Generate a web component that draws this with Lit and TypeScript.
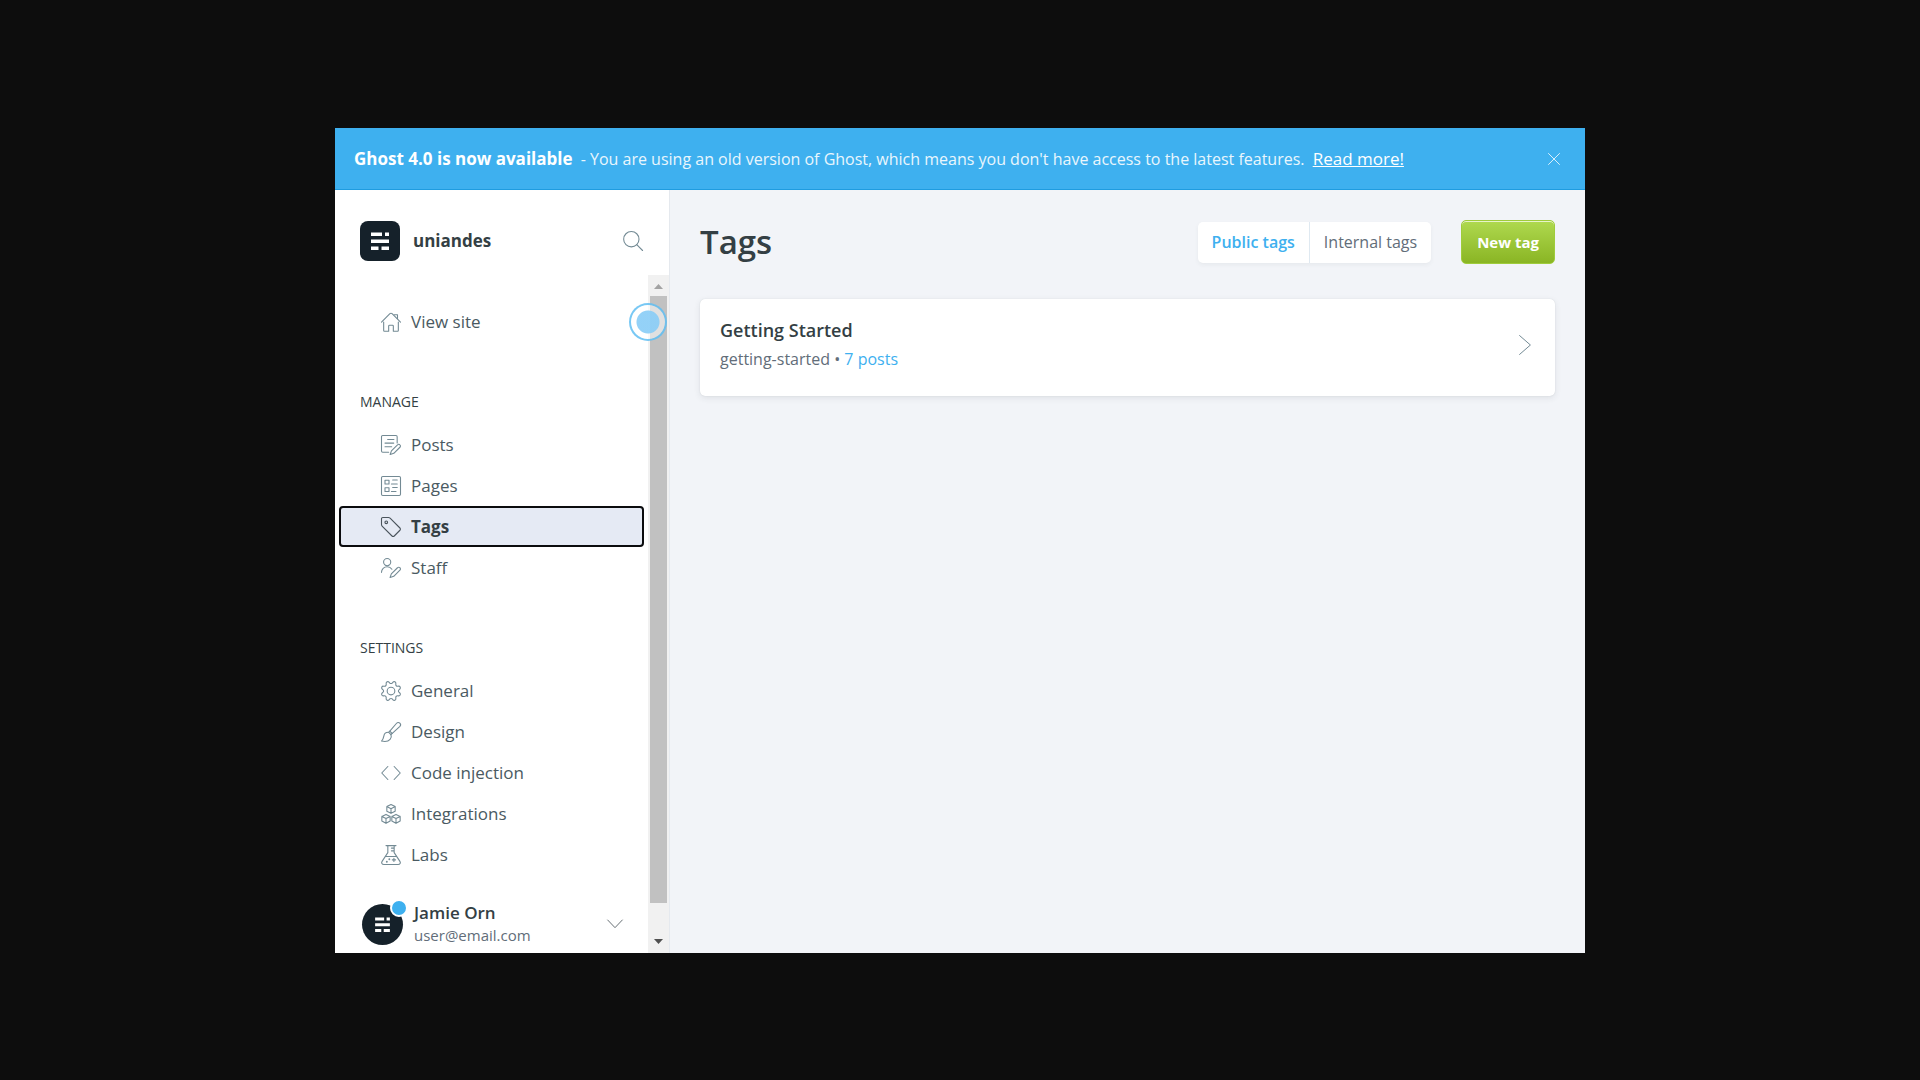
import { LitElement, html, css, svg, nothing } from "lit";
import type { SVGTemplateResult } from "lit";
import { customElement, property, state } from "lit/decorators.js";
import { classMap } from "lit/directives/class-map.js";

const ICONS: Record<string, SVGTemplateResult> = {
  house: svg`<path d="M.6 12.200 10.700 2a1.800 1.800 0 0 1 2.600 0l10.100 10.200"/><path d="M3.200 12v10.300c0 .5.3.8.8.8h5.200v-6.200c0-.6.5-1.100 1.100-1.100h3.400c.6 0 1.100.5 1.100 1.100v6.200H20c.5 0 .8-.3.8-.8V12"/><path d="M15.800 3.300h4v4.600"/>`,
  posts: svg`<path d="M9.200 20.600H2A1.400 1.400 0 0 1 .6 19.200V2A1.400 1.400 0 0 1 2 .6h16A1.400 1.400 0 0 1 19.400 2v7.500"/><path d="M8 5.300h7.500M4.800 9.700h10.500M4.800 14h8"/><path d="M22.700 11.800a2 2 0 0 1 0 2.900l-7.300 7.300-4.400 1.400 1.500-4.300 7.300-7.300a2 2 0 0 1 2.900 0z"/>`,
  pages: svg`<rect x=".6" y=".6" width="22.8" height="22.8" rx="1.5"/><rect x="4.800" y="5" width="4.800" height="4.600"/><rect x="4.800" y="14" width="4.800" height="4.600"/><path d="M14 4.800h5.500M12.500 9.600h7M14 13.800h5.500M12.500 18.600h5.500"/>`,
  tag: svg`<path d="M.6 2.200A1.600 1.600 0 0 1 2.200.6h6.900c.7 0 1.300.3 1.800.7l11.800 11.900a1.900 1.900 0 0 1 0 2.700l-6.800 6.900a1.900 1.900 0 0 1-2.700 0L1.300 10.900A2.500 2.500 0 0 1 .6 9.100z"/><circle cx="6.300" cy="6.300" r="1.600"/>`,
  staff: svg`<circle cx="7.400" cy="4.900" r="4.300"/><path d="M.6 17.200c0-3.800 3-6.800 6.800-6.800 2.400 0 4.500 1.200 5.700 3.100"/><path d="M22.700 11.700a2 2 0 0 1 0 2.900l-7.400 7.400-4.400 1.400 1.500-4.300 7.400-7.400a2 2 0 0 1 2.900 0z"/>`,
  cog: svg`<path d="M10.546 2.438a1.957 1.957 0 0 0 2.908 0L14.400 1.400a1.959 1.959 0 0 1 3.410 1.413l-.071 1.400a1.958 1.958 0 0 0 2.051 2.053l1.400-.071A1.959 1.959 0 0 1 22.600 9.600l-1.038.946a1.958 1.958 0 0 0 0 2.908l1.040.943a1.959 1.959 0 0 1-1.413 3.410l-1.400-.071a1.958 1.958 0 0 0-2.056 2.056l.071 1.400A1.959 1.959 0 0 1 14.400 22.600l-.941-1.041a1.959 1.959 0 0 0-2.908 0L9.600 22.600A1.959 1.959 0 0 1 6.192 21.200l.072-1.400a1.958 1.958 0 0 0-2.056-2.056l-1.400.071A1.958 1.958 0 0 1 1.400 14.400l1.041-.943a1.957 1.957 0 0 0 0-2.908L1.400 9.600A1.958 1.958 0 0 1 2.809 6.200l1.400.071A1.958 1.958 0 0 0 6.264 4.211L6.192 2.810A1.959 1.959 0 0 1 9.600 1.400z"/><circle cx="12" cy="12" r="4.600"/>`,
  brush: svg`<path d="M22.600 1.400a2.700 2.700 0 0 0-3.900.1L9.300 12.400l2.600 2.700L22.700 5.200a2.700 2.700 0 0 0-.1-3.800z"/><path d="m10.600 11 2.700 2.800M9.300 12.400c-3.100-.2-5.400 1.700-5.900 4.500-.4 2.200-1 4.300-2.800 6 4.200.9 8.300.3 10.300-2 1.500-1.700 1.900-3.800 1-5.800"/>`,
  code: svg`<path d="M8.200 4.200.9 12l7.300 7.800M15.800 4.200l7.300 7.800-7.300 7.800"/>`,
  blocks: svg`<path d="m12 .7 5 2.400v5.600l-5 2.500-5-2.500V3.100zM7 3.100l5 2.500 5-2.500M12 5.600v5.600"/><path d="m6 12.500 5 2.400v5.600L6 23.200l-5-2.700v-5.600zM1 14.900l5 2.500 5-2.500M6 17.400v5.800"/><path d="m18 12.500 5 2.400v5.600l-5 2.700-5-2.700v-5.600zM13 14.900l5 2.500 5-2.500M18 17.400v5.800"/>`,
  flask: svg`<path d="M6 .7h12M8.200.7v8.500L1.300 19.600c-1.300 2-.1 3.800 2.200 3.800h17c2.300 0 3.500-1.800 2.200-3.800L15.800 9.200V.7M5.200 13.700h13.600M12.500 3.700h3.300M12.500 7h3.300M15.500 15.800v4M13.500 17.800h4"/><circle cx="10" cy="17" r=".5"/><circle cx="7" cy="20" r=".5"/>`,
  search: svg`<circle cx="10" cy="9.800" r="9.200"/><path d="m16.500 16.400 7 7"/>`,
  close: svg`<path d="m1 1 22 22M23 1 1 23"/>`,
  right: svg`<path d="m5.500.7 13 11.300-13 11.300"/>`,
  down: svg`<path d="m1 6 11 11.500L23 6"/>`,
};

const icon = (name: string) =>
  html`<svg class="icon ${name}" viewBox="0 0 24 24" aria-hidden="true">${ICONS[name]}</svg>`;

const iconStyles = css`
  * {
    box-sizing: border-box;
  }
  .icon {
    display: block;
    flex: none;
    width: 20px;
    height: 20px;
    overflow: visible;
    fill: none;
    stroke: #738a94;
    stroke-width: 1.3;
    stroke-linecap: round;
    stroke-linejoin: round;
  }
  a {
    color: inherit;
    text-decoration: none;
  }
  button {
    font: inherit;
    border: 0;
    padding: 0;
    background: none;
    cursor: pointer;
  }
`;

@customElement("site-mark")
class SiteMark extends LitElement {
  @property({ type: Boolean, reflect: true }) round = false;

  static styles = css`
    :host {
      display: flex;
      flex: none;
      width: 40px;
      height: 40px;
      border-radius: 8px;
      background: #15212a;
    }
    :host([round]) {
      width: 41px;
      height: 41px;
      border-radius: 50%;
    }
    svg {
      width: 100%;
      height: 100%;
      fill: #fff;
    }
    :host([round]) svg {
      transform: scale(0.8);
    }
  `;

  render() {
    return html`<svg viewBox="0 0 40 40" aria-hidden="true">
      <path d="M11 11.500h11v3.500H11zM25 11.500h4v3.500h-4zM11 18.500h18v3.500H11zM11 25.500h7.500v3.500H11zM21.500 25.500H29v3.500h-7.500z" />
    </svg>`;
  }
}

interface NavEntry {
  label: string;
  icon: string;
}

interface NavGroup {
  title?: string;
  entries: NavEntry[];
}

const NAV: NavGroup[] = [
  { entries: [{ label: "View site", icon: "house" }] },
  {
    title: "Manage",
    entries: [
      { label: "Posts", icon: "posts" },
      { label: "Pages", icon: "pages" },
      { label: "Tags", icon: "tag" },
      { label: "Staff", icon: "staff" },
    ],
  },
  {
    title: "Settings",
    entries: [
      { label: "General", icon: "cog" },
      { label: "Design", icon: "brush" },
      { label: "Code injection", icon: "code" },
      { label: "Integrations", icon: "blocks" },
      { label: "Labs", icon: "flask" },
    ],
  },
];

@customElement("admin-sidebar")
class AdminSidebar extends LitElement {
  @state() private current = "Tags";

  static styles = [
    iconStyles,
    css`
      :host {
        display: flex;
        flex-direction: column;
        flex: none;
        width: 335px;
        background: #fff;
        border-right: 1px solid #e5e9ee;
      }
      .head {
        display: flex;
        align-items: center;
        gap: 13px;
        padding: 31px 26px 14px 25px;
      }
      .site {
        flex: 1;
        font-size: 17px;
        line-height: 24px;
        font-weight: 700;
      }
      .body {
        position: relative;
        display: flex;
        flex: 1;
      }
      .column {
        display: flex;
        flex-direction: column;
        flex: 1;
        min-width: 0;
        padding-top: 26px;
      }
      ul {
        list-style: none;
        margin: 0;
        padding: 0 4px;
      }
      h2 {
        margin: 50px 0 12px 25px;
        font-size: 14px;
        line-height: 20px;
        font-weight: 400;
        text-transform: uppercase;
      }
      .item {
        display: flex;
        align-items: center;
        gap: 10px;
        height: 41px;
        padding-left: 40px;
        border: 2px solid transparent;
        border-radius: 4px;
        font-size: 17px;
        line-height: 24px;
        color: #4a5a62;
      }
      .item.active {
        border-color: #0b0c0e;
        background: #e5eaf4;
        color: #343f44;
        font-weight: 700;
      }
      .active .icon {
        stroke: #4a545c;
      }
      .user {
        display: flex;
        align-items: center;
        gap: 11px;
        margin-top: auto;
        padding: 0 25px 7px 27px;
        text-align: left;
        color: inherit;
      }
      .avatar {
        position: relative;
      }
      .dot {
        position: absolute;
        top: -5px;
        right: -5px;
        width: 18px;
        height: 18px;
        border: 2px solid #fff;
        border-radius: 50%;
        background: #3eb0ef;
      }
      .who {
        display: flex;
        flex-direction: column;
        flex: 1;
      }
      .name {
        font-size: 17px;
        line-height: 22px;
        font-weight: 600;
      }
      .mail {
        font-size: 15px;
        line-height: 22px;
        color: #626d79;
      }
      .down {
        width: 16px;
        height: 16px;
        stroke: #50595f;
      }
      .scrollbar {
        display: flex;
        flex-direction: column;
        align-items: center;
        flex: none;
        width: 21px;
        background: #f1f1f1;
      }
      .arrow {
        flex: none;
        width: 9px;
        height: 5px;
      }
      .up {
        margin: 9px 0 7px;
        background: #a3a3a3;
        clip-path: polygon(50% 0, 100% 100%, 0 100%);
      }
      .dn {
        margin: 36px 0 9px;
        background: #505050;
        clip-path: polygon(0 0, 100% 0, 50% 100%);
      }
      .thumb {
        flex: 1;
        width: 17px;
        background: #c1c1c1;
      }
      .pointer {
        position: absolute;
        top: 28px;
        right: 2px;
        width: 38px;
        height: 38px;
        border: 2px solid rgba(62, 176, 239, 0.7);
        border-radius: 50%;
        background: radial-gradient(
          circle,
          rgba(142, 207, 247, 0.95) 0 11px,
          rgba(255, 255, 255, 0.5) 12px
        );
      }
    `,
  ];

  private pick(event: Event, label: string) {
    event.preventDefault();
    this.current = label;
  }

  render() {
    return html`
      <div class="head">
        <site-mark></site-mark>
        <span class="site">uniandes</span>
        <button aria-label="Search">${icon("search")}</button>
      </div>
      <div class="body">
        <nav class="column">
          ${NAV.map(
            (group) => html`
              ${group.title ? html`<h2>${group.title}</h2>` : nothing}
              <ul>
                ${group.entries.map(
                  (entry) => html`<li>
                    <a
                      href="#"
                      class=${classMap({ item: true, active: entry.label === this.current })}
                      @click=${(e: Event) => this.pick(e, entry.label)}
                      >${icon(entry.icon)}<span>${entry.label}</span></a
                    >
                  </li>`
                )}
              </ul>
            `
          )}
          <button class="user">
            <span class="avatar"><site-mark round></site-mark><span class="dot"></span></span>
            <span class="who">
              <span class="name">Jamie Orn</span>
              <span class="mail">user@email.com</span>
            </span>
            ${icon("down")}
          </button>
        </nav>
        <div class="scrollbar" aria-hidden="true">
          <span class="arrow up"></span>
          <span class="thumb"></span>
          <span class="arrow dn"></span>
        </div>
        <span class="pointer"></span>
      </div>
    `;
  }
}

@customElement("tags-screen")
class TagsScreen extends LitElement {
  @state() private tab = "Public tags";

  static styles = [
    iconStyles,
    css`
      :host {
        display: block;
        flex: 1;
        min-width: 0;
        padding: 30px;
        background: #f2f4f8;
      }
      header {
        display: flex;
        align-items: center;
        height: 44px;
        margin-bottom: 35px;
      }
      h1 {
        flex: 1;
        margin: 0;
        font-size: 33px;
        line-height: 44px;
        font-weight: 600;
      }
      .tabs {
        display: flex;
        margin-right: 30px;
        border-radius: 5px;
        background: #fff;
        box-shadow: 0 2px 4px rgba(52, 63, 68, 0.06);
      }
      .tab {
        padding: 0 14px;
        font-size: 16px;
        line-height: 41px;
        color: #626d79;
      }
      .tab + .tab {
        border-left: 1px solid #dfe9f1;
      }
      .tab.on {
        color: #3eb0ef;
        font-weight: 600;
      }
      .new {
        padding: 0 15px;
        border: 1px solid #9fcc3b;
        border-radius: 5px;
        background: linear-gradient(#afd94f, #8ab524);
        box-shadow: inset 0 1px 0 rgba(255, 255, 255, 0.7);
        color: #fff;
        font-size: 15px;
        line-height: 42px;
        font-weight: 700;
      }
      ul {
        list-style: none;
        margin: 0;
        padding: 0;
        border-radius: 5px;
        background: #fff;
        box-shadow: 0 0 1px rgba(52, 63, 68, 0.2), 0 2px 6px rgba(52, 63, 68, 0.1);
      }
      li {
        display: flex;
        align-items: center;
        padding: 19px 20px 25px;
      }
      .info {
        flex: 1;
      }
      h3 {
        margin: 0 0 6px;
        font-size: 18px;
        line-height: 24px;
        font-weight: 600;
      }
      p {
        margin: 0;
        font-size: 16px;
        line-height: 23px;
        color: #626d79;
      }
      .count {
        color: #3eb0ef;
      }
      .right {
        stroke-width: 1.2;
      }
    `,
  ];

  render() {
    return html`
      <header>
        <h1>Tags</h1>
        <div class="tabs">
          ${["Public tags", "Internal tags"].map(
            (label) => html`<button
              class=${classMap({ tab: true, on: label === this.tab })}
              @click=${() => (this.tab = label)}
            >
              ${label}
            </button>`
          )}
        </div>
        <button class="new">New tag</button>
      </header>
      <ul>
        <li>
          <div class="info">
            <h3>Getting Started</h3>
            <p>getting-started • <a class="count" href="#">7 posts</a></p>
          </div>
          <a href="#" aria-label="Edit Getting Started">${icon("right")}</a>
        </li>
      </ul>
    `;
  }
}

@customElement("app-root")
class AppRoot extends LitElement {
  static styles = [
    iconStyles,
    css`
      :host {
        display: flex;
        min-height: 100vh;
        box-sizing: border-box;
        padding: 128px 335px 127px;
        background: #0d0d0d;
        color: #343f44;
        font-family: "Open Sans", "Noto Sans", sans-serif;
      }
      .window {
        display: flex;
        flex-direction: column;
        flex: 1;
        min-width: 0;
      }
      .banner {
        display: flex;
        align-items: center;
        gap: 20px;
        min-height: 62px;
        padding: 0 25px 0 19px;
        border-bottom: 1px solid #1f9ce0;
        background: #3eb0ef;
        color: #fff;
        font-size: 16px;
        line-height: 24px;
      }
      .message {
        flex: 1;
        color: #e9f6fd;
      }
      .message b,
      .message a {
        font-size: 17px;
        color: #fff;
      }
      .message b {
        margin-right: 4px;
      }
      .message a {
        margin-left: 4px;
        text-decoration: underline;
      }
      .close {
        width: 12px;
        height: 12px;
        stroke: #fff;
        stroke-width: 1.6;
      }
      .panes {
        display: flex;
        flex: 1;
      }
      @media (max-width: 1500px) {
        :host {
          padding: 0;
        }
      }
    `,
  ];

  render() {
    return html`
      <div class="window">
        <div class="banner" role="status">
          <span class="message"
            ><b>Ghost 4.0 is now available</b> - You are using an old version of Ghost, which means
            you don't have access to the latest features. <a href="#">Read more!</a></span
          >
          <button aria-label="Dismiss">${icon("close")}</button>
        </div>
        <div class="panes">
          <admin-sidebar></admin-sidebar>
          <tags-screen></tags-screen>
        </div>
      </div>
    `;
  }
}
